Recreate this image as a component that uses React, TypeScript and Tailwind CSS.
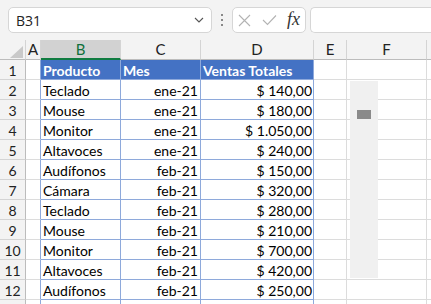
const font = "font-['Lato','Liberation_Sans',sans-serif]";

const rows: string[][] = [
	['Teclado', 'ene-21', '$ 140,00'],
	['Mouse', 'ene-21', '$ 180,00'],
	['Monitor', 'ene-21', '$ 1.050,00'],
	['Altavoces', 'ene-21', '$ 240,00'],
	['Audífonos', 'feb-21', '$ 150,00'],
	['Cámara', 'feb-21', '$ 320,00'],
	['Teclado', 'feb-21', '$ 280,00'],
	['Mouse', 'feb-21', '$ 210,00'],
	['Monitor', 'feb-21', '$ 700,00'],
	['Altavoces', 'feb-21', '$ 420,00'],
	['Audífonos', 'feb-21', '$ 250,00'],
];

const headers = [
	{ key: 'A', w: 'w-[15px]' },
	{ key: 'B', w: 'w-[80px]' },
	{ key: 'C', w: 'w-[80px]' },
	{ key: 'D', w: 'w-[113px]' },
	{ key: 'E', w: 'w-[33px]' },
	{ key: 'F', w: 'w-[80px]' },
];

const grid = 'border-[#dcdcdc]';
const tbl = 'border-[#8ea9db]';

const RowHead = ({ n }: { n?: number }) => (
	<div className="w-[26px] shrink-0 h-[20px] flex items-center justify-center bg-[#f3f3f3] border-r border-b border-r-[#bcbcbc] border-b-[#d4d4d4] text-[14px] text-[#222] pt-[1px]">
		{n}
	</div>
);

const NameBox = () => (
	<div className="ml-[8px] w-[204px] h-[26px] bg-white border border-[#d6d6d6] rounded-[5px] flex items-center justify-between pl-[7px] pr-[7px]">
		<span className="text-[14px] text-[#222] font-['Open_Sans',sans-serif]">B31</span>
		<svg width="10" height="6" viewBox="0 0 10 6">
			<path d="M1 1 L5 5 L9 1" fill="none" stroke="#555" strokeWidth="1.1" />
		</svg>
	</div>
);

const FxBox = () => (
	<div className="ml-[9px] w-[74px] h-[26px] bg-white border border-[#d6d6d6] rounded-[5px] flex items-center pl-[5px]">
		<svg width="13" height="13" viewBox="0 0 13 13">
			<path d="M1 1 L12 12 M12 1 L1 12" stroke="#b3b3b3" strokeWidth="1.1" />
		</svg>
		<svg width="15" height="12" viewBox="0 0 15 12" className="ml-[11px]">
			<path d="M1 6 L5.5 10.5 L14 1.5" fill="none" stroke="#b3b3b3" strokeWidth="1.1" />
		</svg>
		<span className="ml-[10px] italic text-[18px] leading-none text-[#333] font-['Liberation_Serif',serif] pb-[2px]">fx</span>
	</div>
);

export default function App() {
	return (
		<div className={`relative w-[431px] h-[304px] overflow-hidden bg-white ${font}`}>
			<div className="h-[40px] bg-[#f3f3f3] flex items-start pt-[7px]">
				<NameBox />
				<div className="ml-[8px] w-[3px] h-[26px] flex flex-col items-center justify-center gap-[3px]">
					<div className="w-[2px] h-[2px] bg-[#888]" />
					<div className="w-[2px] h-[2px] bg-[#888]" />
					<div className="w-[2px] h-[2px] bg-[#888]" />
				</div>
				<FxBox />
				<div className="ml-[4px] flex-1 h-[26px] bg-white border border-r-0 border-[#d6d6d6] rounded-l-[5px]" />
			</div>

			<div className="flex h-[20px] bg-[#f3f3f3]">
				<div className="relative w-[26px] shrink-0 h-[20px] border-r border-b border-r-[#d4d4d4] border-b-[#bcbcbc]">
					<svg width="13" height="12" viewBox="0 0 13 12" className="absolute left-[10px] top-[6px]">
						<path d="M13 0 L13 12 L0 12 Z" fill="#c9c9c9" />
					</svg>
				</div>
				{headers.map((h) => (
					<div
						key={h.key}
						className={`${h.w} shrink-0 h-[20px] flex items-center justify-center border-r border-r-[#d4d4d4] text-[15px] ${
							h.key === 'B'
								? 'bg-[#d2d2d2] text-[#0f703b] border-b-2 border-b-[#107c41]'
								: 'text-[#222] border-b border-b-[#bcbcbc]'
						}`}
					>
						{h.key}
					</div>
				))}
				<div className="flex-1 h-[20px] border-b border-b-[#bcbcbc]" />
			</div>

			<div className="flex h-[20px]">
				<RowHead n={1} />
				<div className={`w-[15px] shrink-0 h-[20px] border-r border-b ${grid} border-r-[#8ea9db]`} />
				{['Producto', 'Mes', 'Ventas Totales'].map((t, i) => (
					<div
						key={t}
						className={`${i === 2 ? 'w-[113px]' : 'w-[80px]'} shrink-0 h-[20px] bg-[#4472c4] text-white font-bold text-[14px] flex items-center pl-[2px] pt-[1px] border-r border-b ${tbl}`}
					>
						{t}
					</div>
				))}
				<div className={`w-[33px] shrink-0 h-[20px] border-r border-b ${grid}`} />
				<div className={`w-[80px] shrink-0 h-[20px] border-r border-b ${grid}`} />
				<div className={`flex-1 h-[20px] border-b ${grid}`} />
			</div>

			{[...rows, ['', '', '']].map((r, idx) => (
				<div key={idx} className="flex h-[20px]">
					<RowHead n={idx < rows.length ? idx + 2 : undefined} />
					<div className={`w-[15px] shrink-0 h-[20px] border-r border-b ${grid} border-r-[#8ea9db]`} />
					<div className={`w-[80px] shrink-0 h-[20px] text-[14px] text-black flex items-center pl-[2px] pt-[1px] border-r border-b ${tbl}`}>
						{r[0]}
					</div>
					<div className={`w-[80px] shrink-0 h-[20px] text-[14px] text-black flex items-center justify-end pr-[2px] pt-[1px] border-r border-b ${tbl}`}>
						{r[1]}
					</div>
					<div className={`w-[113px] shrink-0 h-[20px] text-[14px] text-black flex items-center justify-end pr-[1px] pt-[1px] border-r border-b ${tbl}`}>
						{r[2]}
					</div>
					<div className={`w-[33px] shrink-0 h-[20px] border-r border-b ${grid}`} />
					<div className={`w-[80px] shrink-0 h-[20px] border-r border-b ${grid}`} />
					<div className={`flex-1 h-[20px] border-b ${grid}`} />
				</div>
			))}

			{/* scroll bar control floating over column F */}
			<div className="absolute left-[350px] top-[81px] w-[28px] h-[197px] bg-[#f0f0f0]">
				<div className="absolute left-[7px] top-[29px] w-[14px] h-[9px] bg-[#8a8a8a]" />
			</div>
		</div>
	);
}
